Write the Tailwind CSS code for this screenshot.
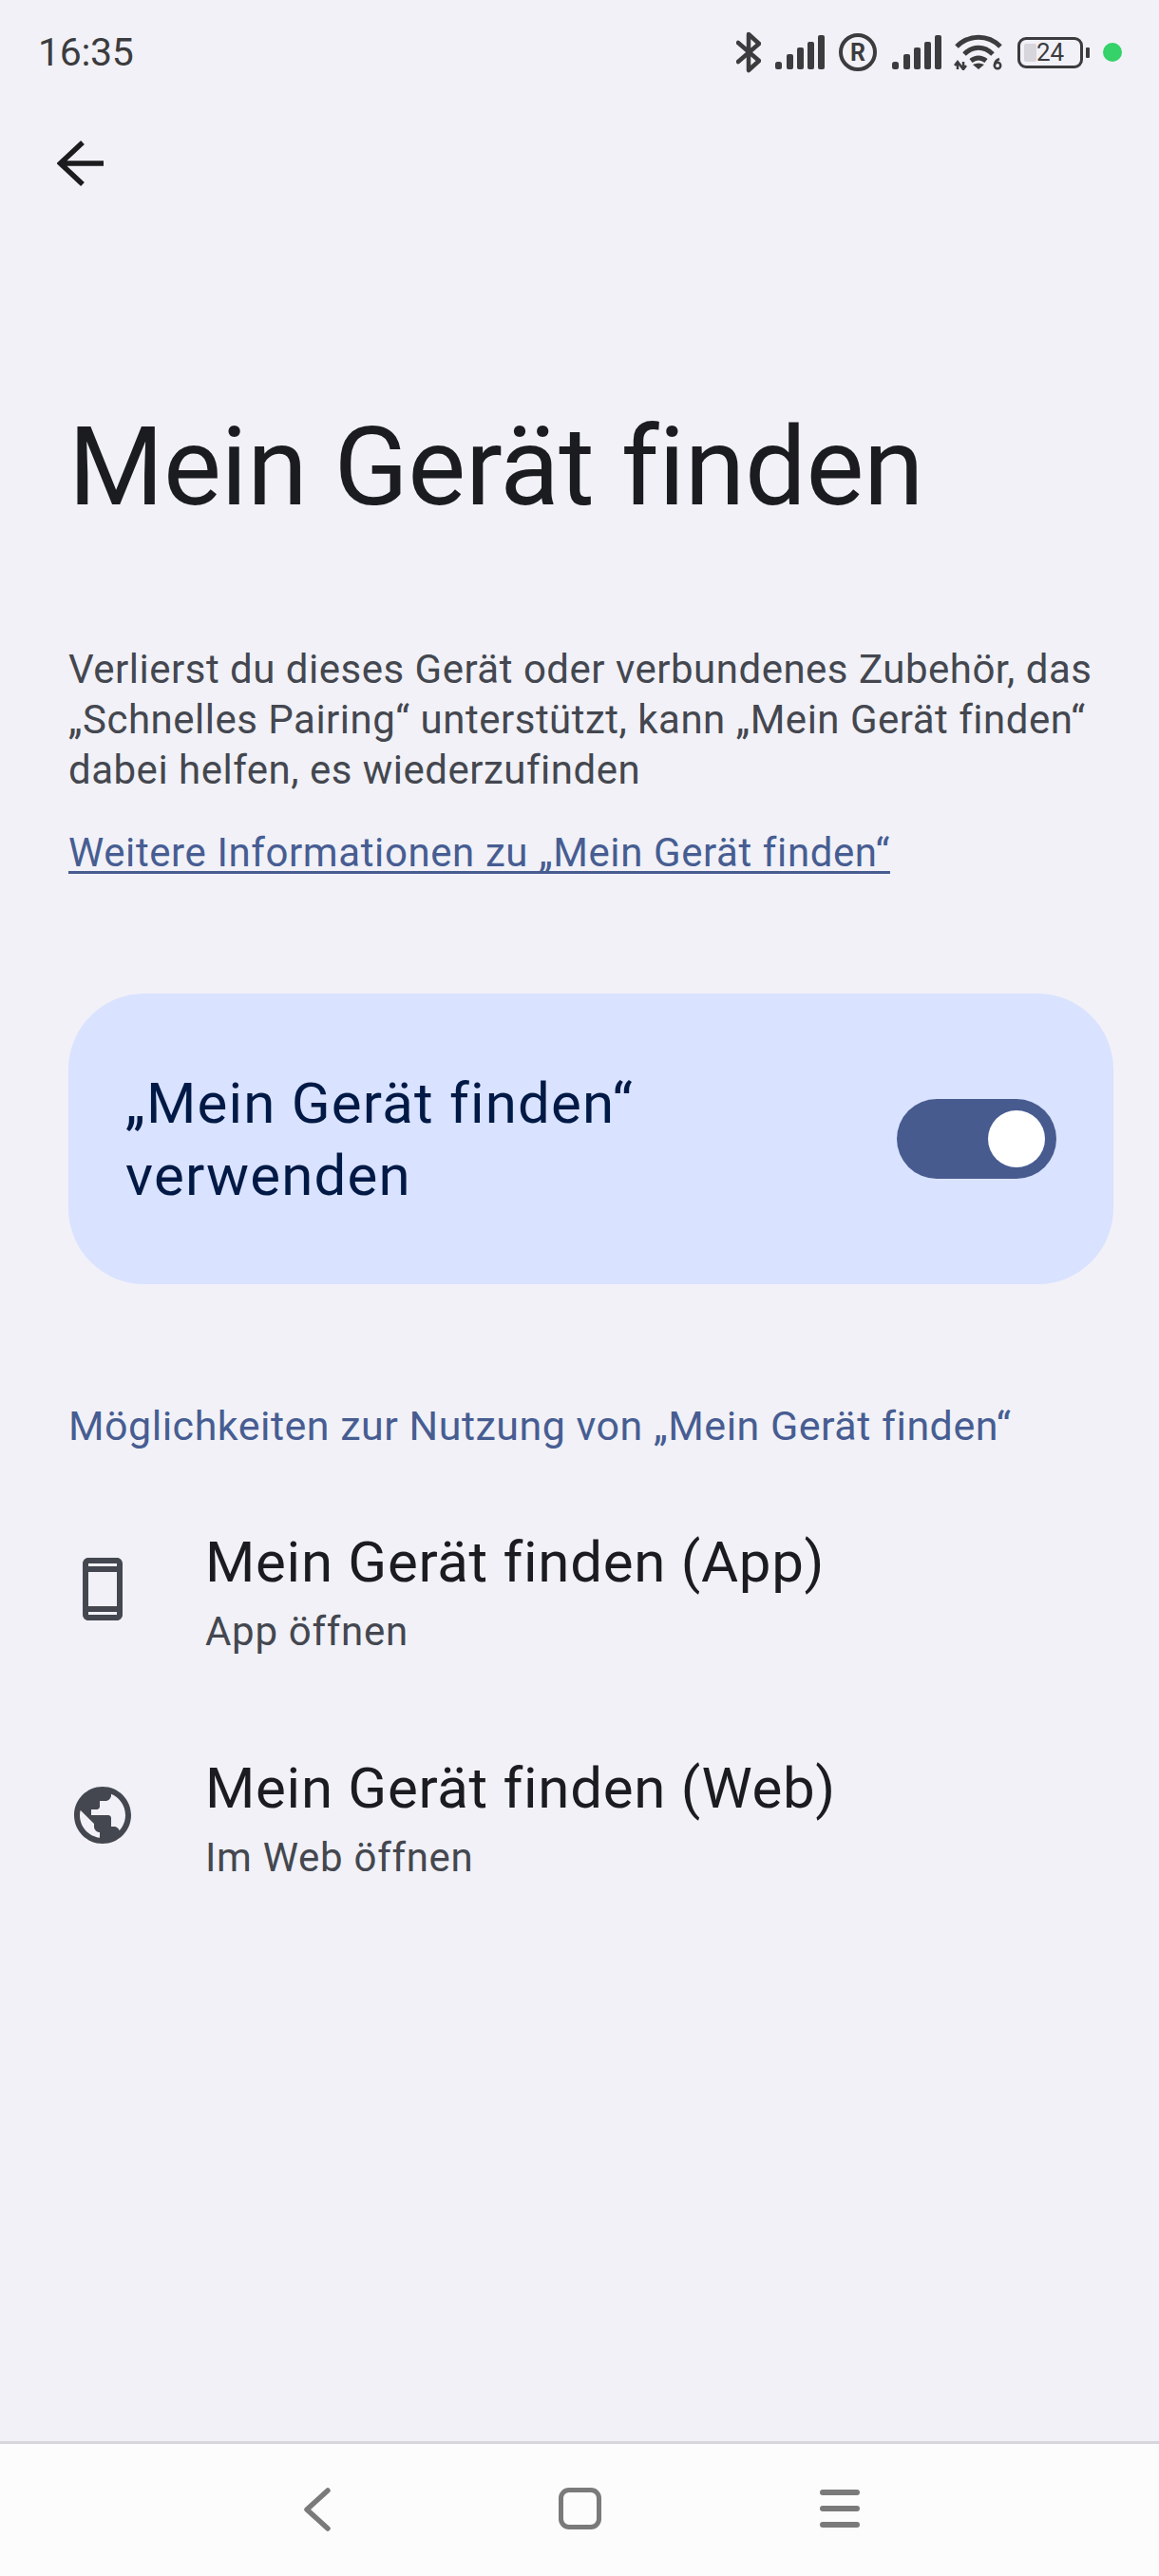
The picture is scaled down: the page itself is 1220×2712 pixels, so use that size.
<!DOCTYPE html>
<html lang="de">
<head>
    <meta charset="UTF-8">
    <meta name="viewport" content="width=device-width, initial-scale=1.0">
    <title>Mein Gerät finden</title>
    <script src="https://cdn.jsdelivr.net/npm/@tailwindcss/browser@4"></script>
</head>
<body class="bg-[#f1f1f7] font-[Roboto,sans-serif]">
<div class="w-[1220px] h-[2712px] flex flex-col">
    <!-- Status bar -->
    <div class="h-[110px] flex items-center justify-between pl-[40px] pr-[39px] text-[#3c3c3e] shrink-0">
        <span class="text-[41px] leading-[50px] tracking-[-0.3px]">16:35</span>
        <div class="flex items-center">
            <svg class="w-[26px] h-[44px]" viewBox="0 0 26 44" fill="none" stroke="#3c3c3e" stroke-width="4.5" stroke-linecap="round" stroke-linejoin="round"><path d="M2 12 24 31 13 41V3L24 13 2 32"/></svg>
            <svg class="w-[52px] h-[36px] ml-[15px]" viewBox="0 0 52 36" fill="#3c3c3e"><rect x="0" y="28" width="7" height="8" rx="2.5"/><rect x="12" y="20" width="7" height="16" rx="2"/><rect x="23" y="13" width="7" height="23" rx="2"/><rect x="34" y="7" width="7" height="29" rx="2"/><rect x="45" y="0" width="7" height="36" rx="2"/></svg>
            <div class="w-[40px] h-[40px] ml-[15px] rounded-full border-[4px] border-[#3c3c3e] flex items-center justify-center text-[25px] font-bold leading-none">R</div>
            <svg class="w-[52px] h-[36px] ml-[16px]" viewBox="0 0 52 36" fill="#3c3c3e"><rect x="0" y="28" width="7" height="8" rx="2.5"/><rect x="12" y="20" width="7" height="16" rx="2"/><rect x="23" y="13" width="7" height="23" rx="2"/><rect x="34" y="7" width="7" height="29" rx="2"/><rect x="45" y="0" width="7" height="36" rx="2"/></svg>
            <svg class="w-[52px] h-[38px] ml-[13px]" viewBox="0 0 52 38" fill="none" stroke="#3c3c3e" stroke-width="5"><path d="M3 13C16 0 36 0 49 13"/><path d="M11 21C20 12 32 12 41 21"/><path d="M18 28C23 24 29 24 34 28"/><path d="M26 37 20 32C24 30 28 30 32 32Z" fill="#3c3c3e" stroke="none"/><path d="M4 37V30M1 33 4 29 7 33M10 29V36M7 33 10 37 13 33" stroke-width="2.5"/><circle cx="46" cy="33" r="3.2" stroke-width="2.5"/><path d="M43 33C43 29 45 27 48 26" stroke-width="2.5"/></svg>
            <div class="w-[69px] h-[33px] ml-[15px] rounded-[9px] border-[3.5px] border-[#3c3c3e] relative flex items-center justify-center">
                <div class="absolute left-[4px] top-[4px] bottom-[4px] w-[13px] bg-[#d6d6dc] rounded-[2px]"></div>
                <span class="relative text-[26px] leading-none font-normal">24</span>
            </div>
            <div class="w-[4px] h-[11px] ml-[3px] bg-[#3c3c3e] rounded-[1px]"></div>
            <div class="w-[20px] h-[20px] ml-[14px] rounded-full bg-[#34d268]"></div>
        </div>
    </div>

    <!-- Toolbar -->
    <div class="h-[62px] mt-[31px] pl-[60px] flex items-center shrink-0">
        <svg class="w-[50px] h-[50px]" viewBox="0 0 50 50" fill="none" stroke="#1c1c1e" stroke-width="5.5"><path d="M49 25H4M27 3 3.500 25 27 47"/></svg>
    </div>

    <main class="flex-1 pl-[72px]">
        <h1 class="mt-[219px] text-[115px] leading-[140px] tracking-[-0.4px] text-[#1a1c20]">Mein Gerät finden</h1>
        <p class="mt-[116px] w-[1120px] text-[42px] leading-[53px] tracking-[0.5px] text-[#44474f]">Verlierst du dieses Gerät oder verbundenes Zubehör, das<br>„Schnelles Pairing“ unterstützt, kann „Mein Gerät finden“<br>dabei helfen, es wiederzufinden</p>
        <a class="block mt-[34px] text-[42px] leading-[53px] tracking-[0.6px] text-[#475d92] underline underline-offset-[5px] decoration-[3px] [text-decoration-skip-ink:none]">Weitere Informationen zu „Mein Gerät finden“</a>

        <!-- Toggle card -->
        <div class="mt-[122px] w-[1100px] h-[306px] rounded-[80px] bg-[#d9e2ff] pl-[60px] pr-[60px] flex items-center justify-between">
            <span class="text-[60px] leading-[76px] tracking-[1.2px] text-[#001945] w-[640px] pt-[2px]">„Mein Gerät finden“ verwenden</span>
            <div class="w-[168px] h-[84px] rounded-full bg-[#475b8f] flex items-center justify-end pr-[12px]">
                <div class="w-[60px] h-[60px] rounded-full bg-white"></div>
            </div>
        </div>

        <div class="mt-[122px] text-[43px] leading-[54px] tracking-[0.5px] text-[#475d92]">Möglichkeiten zur Nutzung von „Mein Gerät finden“</div>

        <!-- Rows -->
        <div class="mt-[83px] flex flex-col gap-[105px]">
            <div class="flex items-start">
                <svg class="w-[72px] h-[72px] mt-[26px]" viewBox="0 0 24 24" fill="#44474f"><path d="M17 1.010 7 1c-1.100 0-1.990.9-1.990 2v18c0 1.100.89 2 1.990 2h10c1.100 0 2-.9 2-2V3c0-1.100-.9-1.990-2-1.990zM17 21H7v-1h10v1zm0-3H7V6h10v12zM7 4V3h10v1H7z"/></svg>
                <div class="ml-[72px]">
                    <div class="text-[60px] leading-[68px] tracking-[0.7px] text-[#1a1c20]">Mein Gerät finden (App)</div>
                    <div class="text-[42px] leading-[52px] tracking-[0.7px] text-[#44474f] mt-[13px]">App öffnen</div>
                </div>
            </div>
            <div class="flex items-start">
                <svg class="w-[72px] h-[72px] mt-[26px]" viewBox="0 0 24 24" fill="#44474f"><path d="M12 2C6.480 2 2 6.480 2 12s4.480 10 10 10 10-4.480 10-10S17.520 2 12 2zm-1 17.930c-3.950-.49-7-3.850-7-7.930 0-.62.08-1.210.21-1.790L9 15v1c0 1.100.9 2 2 2v1.930zm6.900-2.540c-.26-.81-1-1.390-1.900-1.390h-1v-3c0-.55-.45-1-1-1H8v-2h2c.55 0 1-.45 1-1V7h2c1.100 0 2-.9 2-2v-.41c2.930 1.190 5 4.060 5 7.410 0 2.080-.8 3.970-2.100 5.390z"/></svg>
                <div class="ml-[72px]">
                    <div class="text-[60px] leading-[68px] tracking-[0.7px] text-[#1a1c20]">Mein Gerät finden (Web)</div>
                    <div class="text-[42px] leading-[52px] tracking-[0.7px] text-[#44474f] mt-[13px]">Im Web öffnen</div>
                </div>
            </div>
        </div>
    </main>

    <!-- Navigation bar -->
    <nav class="h-[142px] shrink-0 bg-[#fcfcfc] border-t-[3px] border-[#d6d6dc] flex items-start pt-[46px] pl-[318px]">
        <svg class="w-[30px] h-[46px]" viewBox="0 0 30 46" fill="none" stroke="#7a7a7a" stroke-width="5.500" stroke-linecap="round" stroke-linejoin="round"><path d="M27 3 5 23 27 43" /></svg>
        <div class="ml-[240px] w-[45px] h-[44px] rounded-[11px] border-[5.500px] border-[#7a7a7a]"></div>
        <div class="ml-[230px] w-[42px] h-[44px] flex flex-col justify-between py-[2px]">
            <div class="h-[6px] rounded-full bg-[#7a7a7a]"></div>
            <div class="h-[6px] rounded-full bg-[#7a7a7a]"></div>
            <div class="h-[6px] rounded-full bg-[#7a7a7a]"></div>
        </div>
    </nav>
</div>
</body>
</html>
